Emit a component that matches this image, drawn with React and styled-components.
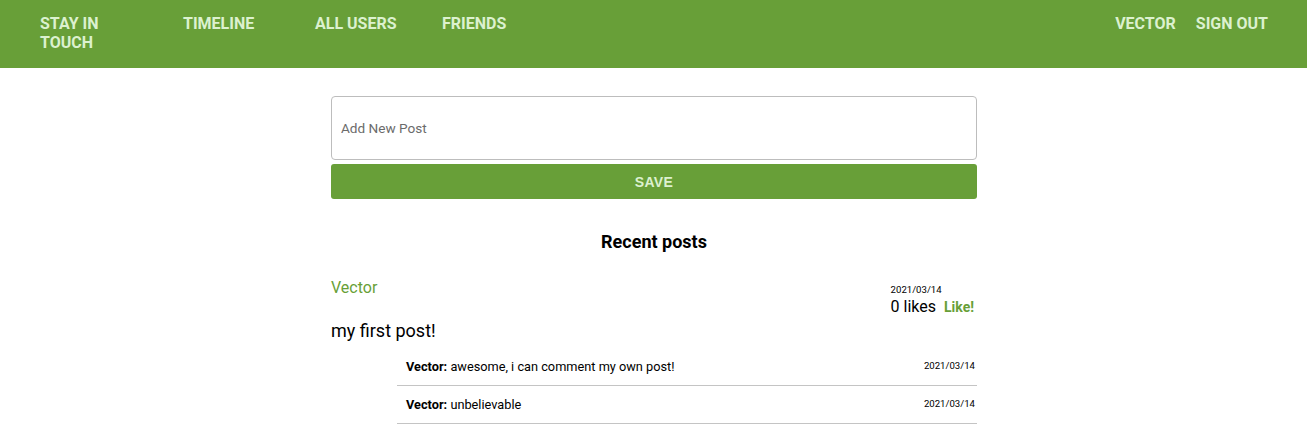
import React from "react";
import styled, { createGlobalStyle } from "styled-components";

const GREEN = "#689f38";
const NAV_TEXT = "#dcf1cf";

const Global = createGlobalStyle`
  body { margin: 0; font-family: Roboto, "Noto Sans", sans-serif; background: #fff; color: #000; }
  * { box-sizing: border-box; }
`;

const Header = styled.header`
  height: 68px;
  background: ${GREEN};
  display: flex;
  justify-content: space-between;
  align-items: flex-start;
  padding: 14px 39px 0 40px;
`;

const NavGroup = styled.nav`
  display: flex;
  align-items: flex-start;
`;

const NavLink = styled.a`
  color: ${NAV_TEXT};
  font-weight: 700;
  font-size: 16px;
  line-height: 19px;
  text-decoration: none;
  width: ${(p) => (p.$w ? `${p.$w}px` : "auto")};
  margin-right: ${(p) => p.$mr || 0}px;
  cursor: pointer;
`;

const Page = styled.div`
  display: flex;
  justify-content: center;
  padding-left: 1px;
`;

const Main = styled.main`
  width: 646px;
  margin-top: 28px;
`;

const PostInput = styled.input`
  width: 100%;
  height: 64px;
  border: 1px solid #bdbdbd;
  border-radius: 4px;
  padding: 0 9px;
  font-family: Roboto, sans-serif;
  font-size: 13.6px;
  outline: none;
  &::placeholder { color: #6b6b6b; }
`;

const SaveButton = styled.button`
  display: block;
  width: 100%;
  height: 35px;
  margin-top: 4px;
  border: none;
  border-radius: 3px;
  background: ${GREEN};
  color: ${NAV_TEXT};
  font-family: "Liberation Sans", Arial, sans-serif;
  font-weight: 700;
  font-size: 14px;
  letter-spacing: 0.4px;
`;

const Heading = styled.h2`
  text-align: center;
  font-size: 18px;
  font-weight: 700;
  margin: 32px 0 0;
  line-height: 22px;
`;

const Post = styled.article`
  margin-top: 25px;
`;

const PostTop = styled.div`
  display: flex;
  justify-content: space-between;
  align-items: flex-start;
`;

const Author = styled.div`
  color: ${GREEN};
  font-size: 16px;
  line-height: 19px;
`;

const Meta = styled.div`
  display: flex;
  flex-direction: column;
  align-items: flex-start;
  padding-right: 3px;
  padding-top: 6px;
`;

const SmallDate = styled.div`
  font-size: 9.6px;
  line-height: 12px;
  color: #000;
`;

const LikesRow = styled.div`
  display: flex;
  align-items: baseline;
  gap: 8px;
  margin-top: 1px;
`;

const Likes = styled.span`
  font-size: 16px;
  line-height: 19px;
`;

const LikeBtn = styled.span`
  color: ${GREEN};
  font-weight: 700;
  font-size: 14px;
`;

const Body = styled.p`
  margin: 4px 0 0;
  font-size: 18px;
  line-height: 22px;
`;

const Comments = styled.ul`
  list-style: none;
  margin: 6px 0 0 66px;
  padding: 0;
`;

const Comment = styled.li`
  display: flex;
  justify-content: space-between;
  align-items: flex-start;
  height: 38px;
  padding: 12px 2px 0 9px;
  border-bottom: 1px solid #c4c4c4;
`;

const CommentText = styled.span`
  font-size: 12.75px;
  line-height: 15px;
  margin-top: -1px;
  & b { font-weight: 700; }
`;

export default function App() {
  const comments = [
    { text: "awesome, i can comment my own post!", date: "2021/03/14" },
    { text: "unbelievable", date: "2021/03/14" },
  ];
  return (
    <>
      <Global />
      <Header>
        <NavGroup>
          <NavLink $w={80} $mr={63}>STAY IN TOUCH</NavLink>
          <NavLink $w={132}>TIMELINE</NavLink>
          <NavLink $w={127}>ALL USERS</NavLink>
          <NavLink>FRIENDS</NavLink>
        </NavGroup>
        <NavGroup>
          <NavLink $mr={20}>VECTOR</NavLink>
          <NavLink>SIGN OUT</NavLink>
        </NavGroup>
      </Header>
      <Page>
        <Main>
          <PostInput placeholder="Add New Post" />
          <SaveButton>SAVE</SaveButton>
          <Heading>Recent posts</Heading>
          <Post>
            <PostTop>
              <Author>Vector</Author>
              <Meta>
                <SmallDate>2021/03/14</SmallDate>
                <LikesRow>
                  <Likes>0 likes</Likes>
                  <LikeBtn>Like!</LikeBtn>
                </LikesRow>
              </Meta>
            </PostTop>
            <Body>my first post!</Body>
            <Comments>
              {comments.map((c, i) => (
                <Comment key={i}>
                  <CommentText>
                    <b>Vector:</b> {c.text}
                  </CommentText>
                  <SmallDate>{c.date}</SmallDate>
                </Comment>
              ))}
            </Comments>
          </Post>
        </Main>
      </Page>
    </>
  );
}
